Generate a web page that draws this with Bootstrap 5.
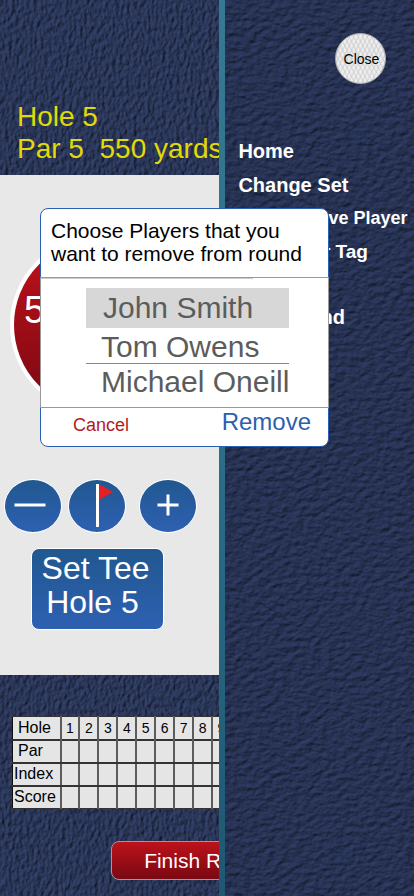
<!DOCTYPE html>
<html lang="en">
<head>
<meta charset="utf-8">
<meta name="viewport" content="width=device-width, initial-scale=1">
<title>Golf round</title>
<link href="https://cdn.jsdelivr.net/npm/bootstrap@5.3.0/dist/css/bootstrap.min.css" rel="stylesheet">
<style>
body { font-family: "Liberation Sans", Arial, sans-serif; background: #293659; }
.felt { inset: 0; z-index: -1; }
.panel { isolation: isolate; min-width: 0; }
.round-panel { flex: 0 0 53%; }
.divider { flex: 0 0 6px; background: linear-gradient(#357a92, #2c6e87 50%, #1e5873); }
.hole-head { padding: 101px 0 10px 17px; font-size: 28px; line-height: 32px; color: #e2da06; white-space: pre; }
.play-area { background: #e8e8e8; padding: 60px 0 46px; }
.distance { width: 180px; height: 180px; margin: 0 0 65px 10px; padding: 49px 0 0 10px; border: 4px solid #fff; background: linear-gradient(#c0121b, #7a0812); color: #fff; font-size: 38px; line-height: 44px; }
.round-btn, .tee-btn { border: 1px solid #fff; background: linear-gradient(#20588f, #2e60b2); color: #fff; padding: 0; }
.round-btn { width: 58px; height: 54px; flex: none; }
.controls { padding-left: 4px; gap: 6px; margin: -1px 0 15px; }
.plus-btn { margin-left: 7px; }
.tee-btn { margin-left: 31px; width: 133px; height: 82px; margin-bottom: -1px; border-radius: 8px; font-size: 32px; line-height: 34px; padding: 0 0 8px; }
.tee-btn span { padding-right: 4px; }
.tee-btn span + span { padding-right: 10px; }
.score-area { padding: 41px 0 17px 12px; }
.score-table { width: 220px; table-layout: fixed; border-collapse: collapse; margin-bottom: 32px; background: #e5e5e5; color: #000; font-size: 16px; line-height: 20px; }
.score-table th, .score-table td { border: 2px solid #5c5c5c; border-top-color: #333; border-bottom-color: #333; height: 23px; padding: 0; font-weight: 400; text-align: center; }
.score-table thead th { border-top-width: 1px; }
.score-table tr:last-child > * { border-bottom-width: 1px; }
.score-table thead th { border-bottom-width: 2px; }
.score-table tr > :first-child { border-left: 1px solid #111; }
.score-table thead th + th { font-size: 14px; }
.score-table .label-col { width: 48px; }
.score-table tbody th { text-align: left; padding-left: 1px; }
.score-table .inset-label { text-align: left; padding-left: 5px; }
.finish-btn { margin-left: 99px; width: 190px; height: 39px; border: 1px solid #9b9b9f; border-radius: 8px; background: linear-gradient(#bd121b, #790913); color: #fff; font-size: 21px; line-height: 24px; padding: 0; }
.menu { padding: 33px 7px 0 13px; }
.close-btn { width: 51px; height: 51px; margin: 0 21px 56px 0; padding: 0 0 0 2px; border: 1px solid #aaa; color: #000; font-size: 14px; line-height: 20px;
  background: repeating-linear-gradient(63deg, #c8c8c880 0 1px, #fff0 2px 4px), repeating-linear-gradient(-63deg, #c8c8c880 0 1px, #fff0 2px 4px), #eee; }
.menu a { color: #fff; font-weight: 700; font-size: 20px; line-height: 23px; text-decoration: none; white-space: nowrap; }
.menu .compact { font-size: 18px; }
.menu .medium { font-size: 19px; }
.menu-list { gap: 10px; }
.menu-list a:first-child { margin-bottom: 1px; }
.end-link { margin-top: 33px; }
.picker { top: 208px; left: 40px; right: 85px; background: #fff; border: 1px solid #2b5fb0; border-radius: 8px; z-index: 5; color: #000; }
.picker-title { font-size: 21px; line-height: 23px; padding: 10px 9px 12px 10px; margin: 0; font-weight: 400; height: 68px; }
.picker-body { border: 1px solid #999; margin: 0 -1px; padding: 0 39px 8px 45px; height: 131px; }
.title-rule { width: 84%; height: 1px; background: #ccc; margin: 0 0 9px -45px; min-width: 212px; }
.player { display: block; width: 100%; border: 0; background: none; padding: 0 0 0 15px; text-align: left; white-space: nowrap; color: #5c5c5c; font-size: 30px; line-height: 36px; }
.player.chosen { background: #d7d7d7; padding: 2px 0 2px 17px; }
.player.ruled { border-bottom: 1px solid #888; padding-top: 3px; line-height: 32px; }
.picker-foot { padding: 0 17px 7px 32px; height: 38px; }
.cancel-btn, .remove-btn { border: 0; background: none; padding: 0; }
.cancel-btn { color: #b3191f; font-size: 18px; line-height: 34px; }
.remove-btn { color: #2b5fb0; font-size: 24px; line-height: 28px; }
</style>
<script src="https://cdn.jsdelivr.net/npm/bootstrap@5.3.0/dist/js/bootstrap.bundle.min.js"></script>
</head>
<body>
<div class="d-flex min-vh-100 position-relative overflow-hidden">
  <main class="panel round-panel d-flex flex-column position-relative overflow-hidden">
    <svg class="felt position-absolute w-100 h-100" aria-hidden="true">
      <filter id="feltA" x="0" y="0" width="100%" height="100%" color-interpolation-filters="sRGB">
        <feTurbulence type="fractalNoise" baseFrequency=".28 .17" numOctaves="3" seed="4"/>
        <feColorMatrix values="0 0 0 0 0  0 0 0 0 0  0 0 0 0 0  1 0 0 0 0"/>
        <feDiffuseLighting surfaceScale="1.5" diffuseConstant="1.1" lighting-color="#313f66"><feDistantLight azimuth="215" elevation="52"/></feDiffuseLighting>
      </filter>
      <rect width="100%" height="100%" filter="url(#feltA)"/>
    </svg>
    <div class="hole-head">Hole 5
Par 5  550 yards</div>
    <section class="play-area">
      <div class="distance rounded-circle">550</div>
      <div class="controls d-flex">
        <button type="button" class="round-btn rounded-circle" aria-label="Previous hole"><svg width="56" height="52" class="d-block"><path d="M9.500 25h31" stroke="#fff" stroke-width="3"/></svg></button>
        <button type="button" class="round-btn rounded-circle" aria-label="Flag"><svg width="56" height="52" class="d-block"><path d="M30 4l14 8-14 8z" fill="#e22126"/><path d="M28.500 4v43" stroke="#fff" stroke-width="3"/></svg></button>
        <button type="button" class="round-btn plus-btn rounded-circle" aria-label="Next hole"><svg width="56" height="52" class="d-block"><path d="M17.500 25h21M28 14.500v21" stroke="#fff" stroke-width="3"/></svg></button>
      </div>
      <button type="button" class="tee-btn d-block"><span class="d-block">Set Tee</span><span class="d-block">Hole 5</span></button>
    </section>
    <section class="score-area flex-grow-1">
      <table class="score-table">
        <thead><tr><th class="label-col inset-label" scope="col">Hole</th><th scope="col">1</th><th scope="col">2</th><th scope="col">3</th><th scope="col">4</th><th scope="col">5</th><th scope="col">6</th><th scope="col">7</th><th scope="col">8</th><th scope="col">9</th></tr></thead>
        <tbody>
          <tr><th scope="row" class="inset-label">Par</th><td></td><td></td><td></td><td></td><td></td><td></td><td></td><td></td><td></td></tr>
          <tr><th scope="row">Index</th><td></td><td></td><td></td><td></td><td></td><td></td><td></td><td></td><td></td></tr>
          <tr><th scope="row">Score</th><td></td><td></td><td></td><td></td><td></td><td></td><td></td><td></td><td></td></tr>
        </tbody>
      </table>
      <button type="button" class="finish-btn">Finish Round</button>
    </section>
  </main>
  <div class="divider"></div>
  <aside class="panel menu flex-fill position-relative d-flex flex-column">
    <svg class="felt position-absolute w-100 h-100" aria-hidden="true">
      <filter id="feltB" x="0" y="0" width="100%" height="100%" color-interpolation-filters="sRGB">
        <feTurbulence type="fractalNoise" baseFrequency=".13 .2" numOctaves="3" seed="9"/>
        <feColorMatrix values="0 0 0 0 0  0 0 0 0 0  0 0 0 0 0  1 0 0 0 0"/>
        <feDiffuseLighting surfaceScale="1.4" diffuseConstant="1.1" lighting-color="#2d3a60"><feDistantLight azimuth="235" elevation="52"/></feDiffuseLighting>
      </filter>
      <rect width="100%" height="100%" filter="url(#feltB)"/>
    </svg>
    <button type="button" class="close-btn rounded-circle align-self-end">Close</button>
    <nav class="menu-list d-flex flex-column">
      <a href="#">Home</a>
      <a href="#">Change Set</a>
      <a href="#" class="compact">Add/Remove Player</a>
      <a href="#" class="medium">Set Player Tag</a>
      <a href="#" class="end-link">End Round</a>
    </nav>
  </aside>
  <div class="picker position-absolute" role="dialog" aria-labelledby="pickerTitle">
    <h1 class="picker-title" id="pickerTitle">Choose Players that you want to remove from round</h1>
    <div class="picker-body">
      <div class="title-rule"></div>
      <button type="button" class="player chosen">John Smith</button>
      <button type="button" class="player ruled">Tom Owens</button>
      <button type="button" class="player">Michael Oneill</button>
    </div>
    <div class="picker-foot d-flex justify-content-between align-items-start">
      <button type="button" class="cancel-btn">Cancel</button>
      <button type="button" class="remove-btn">Remove</button>
    </div>
  </div>
</div>
</body>
</html>
